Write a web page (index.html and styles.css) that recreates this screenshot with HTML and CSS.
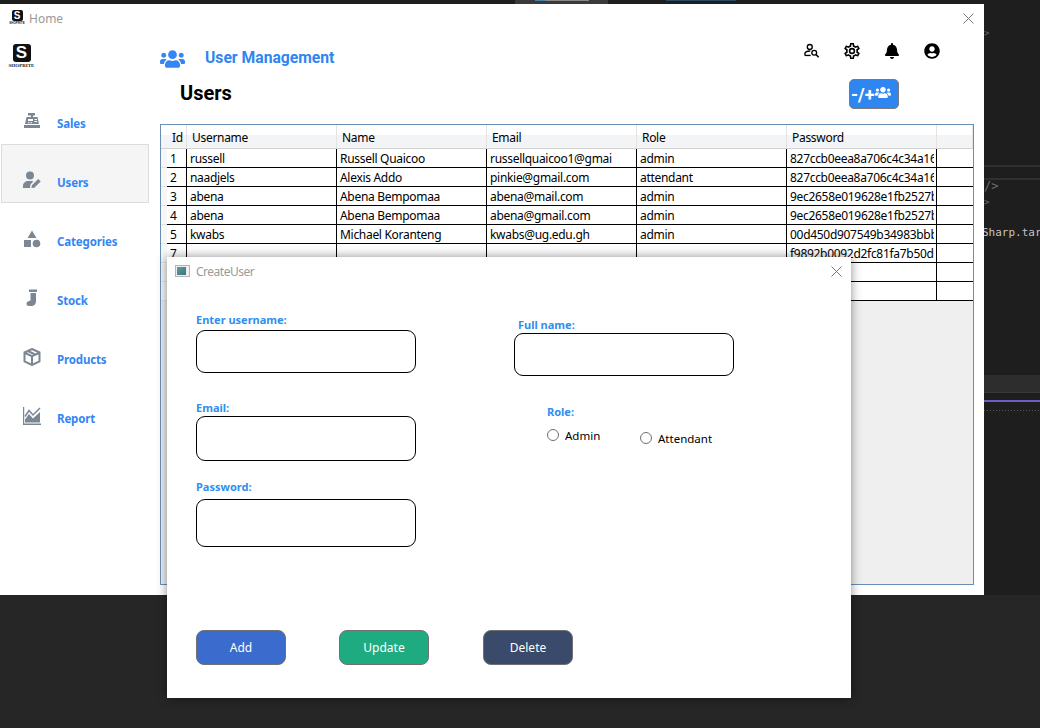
FILE: index.html
```html
<!DOCTYPE html>
<html>
<head>
  <title>Home</title>
  <link rel="stylesheet" href="styles.css">
</head>
<body>

  <!-- DESKTOP BEHIND THE WINDOWS -->
  <div class="editor">
    <div class="tabstrip">
      <div class="tab"><span class="tab-blue"></span><span class="tab-grey"></span></div>
      <span class="tab-frag"></span>
    </div>
    <div class="code">
      <div class="code-mark">&gt;</div>
      <div class="code-rule"></div>
      <div class="code-rule code-rule-2"></div>
      <div class="code-line code-dim code-first">/&gt;</div>
      <div class="code-line code-dim code-small">&gt;</div>
      <div class="code-line code-text">Sharp.tar</div>
      <div class="code-band"></div>
      <div class="code-purple"></div>
      <div class="code-dots"></div>
    </div>
  </div>

  <!-- HOME WINDOW -->
  <div class="window home">
    <div class="titlebar">
      <div class="logo logo-small"><span class="logo-box">S</span><span class="logo-name">SHOPRITE</span></div>
      <span class="titlebar-text">Home</span>
      <svg class="close" viewBox="0 0 11 11"><path d="M.5.5l10 10M10.500.5l-10 10"/></svg>
    </div>

    <div class="home-body">
      <div class="sidebar">
        <div class="logo logo-big"><span class="logo-box">S</span><span class="logo-name">SHOPRITE</span></div>
        <div class="nav">
          <div class="nav-item">
            <svg class="nav-icon" viewBox="0 0 18 18"><path d="M5 1h7v2.500h-2V5h4.500L16 12H2L3.500 5H8V3.500H5zM1 13h16v3H1z"/><path fill="#fff" d="M5 7h5v2H5zM11.500 7H14v1h-2.500zM11.500 9H14v1h-2.500zM5 10.200h1.500v1H5zM7.500 10.200H9v1H7.500z"/></svg>
            <span>Sales</span>
          </div>
          <div class="nav-item nav-active">
            <svg class="nav-icon" viewBox="0 0 18 18"><circle cx="7" cy="4.500" r="4"/><path d="M5 10h3.500c.7 0 1.300.1 1.900.3L7.500 13.500 7 17H0v-2c0-2.800 2.200-5 5-5zM8.500 17l.4-2.800L15.200 8l2.500 2.500-6.300 6.200z"/></svg>
            <span>Users</span>
          </div>
          <div class="nav-item">
            <svg class="nav-icon" viewBox="0 0 18 18"><path d="M9 .5l4.500 7.500h-9zM1 10h7v7H1z"/><circle cx="13.500" cy="13.500" r="3.800"/></svg>
            <span>Categories</span>
          </div>
          <div class="nav-item">
            <svg class="nav-icon" viewBox="0 0 18 18"><path d="M6 .5h8v2.500H6zM7.500 4H13v8.500c0 2.500-2 4.500-4.500 4.500H6c-1.500 0-2.500-1-2.500-2.300 0-1.200.8-2 1.800-2.400L7.500 11.500z"/></svg>
            <span>Stock</span>
          </div>
          <div class="nav-item">
            <svg class="nav-icon nav-box" viewBox="0 0 18 18"><path d="M9 1l7.500 3.500v8.800L9 17l-7.500-3.700V4.500zM2 5l7 3.200L16 5M9 8.200V17M5 3l7 3.500"/></svg>
            <span>Products</span>
          </div>
          <div class="nav-item">
            <svg class="nav-icon" viewBox="0 0 18 18"><path d="M0 0h1.200v16.500H18V18H0z"/><path d="M2 15.500v-3L6 7l4 4.500L17 5v10.500z"/><path fill="none" stroke="#7b8794" stroke-width="1.500" d="M2 9.500L6 3.500l4 4.500 7-7"/></svg>
            <span>Report</span>
          </div>
        </div>
      </div>

      <div class="main">
        <div class="header">
          <svg class="header-icon" viewBox="0 0 640 512"><path d="M96 224c35.300 0 64-28.700 64-64s-28.700-64-64-64-64 28.700-64 64 28.700 64 64 64zm448 0c35.300 0 64-28.700 64-64s-28.700-64-64-64-64 28.700-64 64 28.700 64 64 64zm32 32h-64c-17.600 0-33.500 7.100-45.100 18.600 40.300 22.100 68.900 62 75.100 109.400h66c17.700 0 32-14.300 32-32v-32c0-35.300-28.700-64-64-64zm-256 0c61.900 0 112-50.100 112-112S381.900 32 320 32 208 82.100 208 144s50.100 112 112 112zm76.800 32h-8.300c-20.800 10-43.900 16-68.500 16s-47.600-6-68.500-16h-8.300C179.600 288 128 339.600 128 403.200V432c0 26.500 21.500 48 48 48h288c26.500 0 48-21.500 48-48v-28.800c0-63.600-51.600-115.200-115.200-115.200zm-223.700-13.400C161.500 263.100 145.600 256 128 256H64c-35.300 0-64 28.700-64 64v32c0 17.700 14.300 32 32 32h65.900c6.300-47.400 34.900-87.300 75.200-109.400z"/></svg>
          <span class="header-title">User Management</span>
          <div class="toolbar">
            <svg class="tool-icon" viewBox="0 0 18 18"><circle cx="6.500" cy="4.500" r="2.800" fill="none" stroke="#000" stroke-width="1.500"/><path d="M1 14v-1.500c0-2 2.500-3.500 6-3.500" fill="none" stroke="#000" stroke-width="1.500"/><path d="M1 14h6.500" fill="none" stroke="#000" stroke-width="1.500"/><circle cx="11.500" cy="11" r="2.700" fill="none" stroke="#000" stroke-width="1.500"/><path d="M13.500 13l3 3" fill="none" stroke="#000" stroke-width="1.800"/></svg>
            <svg class="tool-icon" viewBox="2 2 20 20"><path d="M12,8A4,4 0 0,1 16,12A4,4 0 0,1 12,16A4,4 0 0,1 8,12A4,4 0 0,1 12,8M12,10A2,2 0 0,0 10,12A2,2 0 0,0 12,14A2,2 0 0,0 14,12A2,2 0 0,0 12,10M10,22C9.750,22 9.540,21.820 9.500,21.580L9.130,18.930C8.500,18.680 7.960,18.340 7.440,17.940L4.950,18.950C4.730,19.030 4.460,18.950 4.340,18.730L2.340,15.270C2.210,15.050 2.270,14.780 2.460,14.630L4.570,12.970L4.500,12L4.570,11L2.460,9.370C2.270,9.220 2.210,8.950 2.340,8.730L4.340,5.270C4.460,5.050 4.730,4.960 4.950,5.050L7.440,6.050C7.960,5.660 8.500,5.320 9.130,5.070L9.500,2.420C9.540,2.180 9.750,2 10,2H14C14.250,2 14.460,2.180 14.500,2.420L14.870,5.070C15.500,5.320 16.040,5.660 16.560,6.050L19.050,5.050C19.270,4.960 19.540,5.050 19.660,5.270L21.660,8.730C21.790,8.950 21.730,9.220 21.540,9.370L19.430,11L19.500,12L19.430,13L21.540,14.630C21.730,14.780 21.790,15.050 21.660,15.270L19.660,18.730C19.540,18.950 19.270,19.040 19.050,18.950L16.560,17.950C16.040,18.340 15.500,18.680 14.870,18.930L14.500,21.580C14.460,21.820 14.250,22 14,22H10M11.250,4L10.880,6.610C9.680,6.860 8.620,7.500 7.850,8.390L5.440,7.350L4.690,8.650L6.800,10.200C6.400,11.370 6.400,12.640 6.800,13.800L4.680,15.360L5.430,16.660L7.860,15.620C8.630,16.500 9.680,17.140 10.870,17.380L11.240,20H12.760L13.130,17.390C14.320,17.140 15.370,16.500 16.140,15.620L18.570,16.660L19.320,15.360L17.200,13.810C17.600,12.640 17.600,11.370 17.200,10.200L19.310,8.650L18.560,7.350L16.150,8.390C15.380,7.500 14.320,6.860 13.120,6.620L12.750,4H11.250Z"/></svg>
            <svg class="tool-icon" viewBox="0 0 448 512"><path d="M224 512c35.320 0 63.970-28.650 63.970-64H160.030c0 35.350 28.650 64 63.970 64zm215.390-149.710c-19.320-20.760-55.470-51.990-55.470-154.290 0-77.700-54.480-139.900-127.940-155.160V32c0-17.670-14.320-32-31.980-32s-31.980 14.330-31.980 32v20.840C118.560 68.100 64.080 130.300 64.080 208c0 102.300-36.150 133.530-55.470 154.290-6 6.450-8.660 14.160-8.610 21.710.11 16.400 12.980 32 32.100 32h383.800c19.120 0 32-15.600 32.100-32 .05-7.550-2.610-15.270-8.610-21.710z"/></svg>
            <svg class="tool-icon" viewBox="0 0 496 512"><path d="M248 8C111 8 0 119 0 256s111 248 248 248 248-111 248-248S385 8 248 8zm0 96c48.600 0 88 39.400 88 88s-39.400 88-88 88-88-39.400-88-88 39.400-88 88-88zm0 344c-58.700 0-111.300-26.600-146.500-68.200 18.800-35.400 55.600-59.800 98.500-59.800 2.400 0 4.800.4 7.100 1.100 13 4.200 26.600 6.900 40.900 6.900 14.300 0 28-2.700 40.900-6.900 2.300-.7 4.700-1.100 7.100-1.100 42.900 0 79.700 24.400 98.500 59.800C359.300 421.400 306.700 448 248 448z"/></svg>
          </div>
        </div>

        <div class="subheader">
          <span class="page-title">Users</span>
          <button class="manage-btn">-/+<svg class="manage-icon" viewBox="0 0 640 512"><path d="M96 224c35.300 0 64-28.700 64-64s-28.700-64-64-64-64 28.700-64 64 28.700 64 64 64zm448 0c35.300 0 64-28.700 64-64s-28.700-64-64-64-64 28.700-64 64 28.700 64 64 64zm32 32h-64c-17.600 0-33.500 7.100-45.100 18.600 40.300 22.100 68.900 62 75.100 109.400h66c17.700 0 32-14.300 32-32v-32c0-35.300-28.700-64-64-64zm-256 0c61.900 0 112-50.100 112-112S381.900 32 320 32 208 82.100 208 144s50.100 112 112 112zm76.800 32h-8.300c-20.800 10-43.900 16-68.500 16s-47.600-6-68.500-16h-8.300C179.600 288 128 339.600 128 403.200V432c0 26.500 21.500 48 48 48h288c26.500 0 48-21.500 48-48v-28.800c0-63.600-51.600-115.200-115.200-115.200zm-223.700-13.400C161.500 263.100 145.600 256 128 256H64c-35.300 0-64 28.700-64 64v32c0 17.700 14.300 32 32 32h65.900c6.300-47.400 34.900-87.300 75.200-109.400z"/></svg></button>
        </div>

        <div class="grid">
          <table class="users">
            <colgroup>
              <col class="col-head"><col class="col-id"><col class="col-wide"><col class="col-wide"><col class="col-wide"><col class="col-wide"><col class="col-wide"><col class="col-rest">
            </colgroup>
            <thead>
              <tr><th class="head-left"></th><th>Id</th><th>Username</th><th>Name</th><th>Email</th><th>Role</th><th>Password</th><th></th></tr>
            </thead>
            <tbody>
              <tr><th></th><td>1</td><td>russell</td><td>Russell Quaicoo</td><td>russellquaicoo1@gmai</td><td>admin</td><td><span class="pw">827ccb0eea8a706c4c34a16</span></td><td></td></tr>
              <tr><th></th><td>2</td><td>naadjels</td><td>Alexis Addo</td><td>pinkie@gmail.com</td><td>attendant</td><td><span class="pw">827ccb0eea8a706c4c34a16</span></td><td></td></tr>
              <tr><th></th><td>3</td><td>abena</td><td>Abena Bempomaa</td><td>abena@mail.com</td><td>admin</td><td><span class="pw">9ec2658e019628e1fb2527b</span></td><td></td></tr>
              <tr><th></th><td>4</td><td>abena</td><td>Abena Bempomaa</td><td>abena@gmail.com</td><td>admin</td><td><span class="pw">9ec2658e019628e1fb2527b</span></td><td></td></tr>
              <tr><th></th><td>5</td><td>kwabs</td><td>Michael Koranteng</td><td>kwabs@ug.edu.gh</td><td>admin</td><td><span class="pw">00d450d907549b34983bbb</span></td><td></td></tr>
              <tr><th></th><td>7</td><td></td><td></td><td></td><td></td><td><span class="pw">f9892b0092d2fc81fa7b50d0</span></td><td></td></tr>
              <tr><th></th><td></td><td></td><td></td><td></td><td></td><td></td><td></td></tr>
              <tr><th></th><td></td><td></td><td></td><td></td><td></td><td></td><td></td></tr>
            </tbody>
          </table>
        </div>
      </div>
    </div>
  </div>

  <!-- CREATE USER DIALOG -->
  <div class="window dialog">
    <div class="titlebar dialog-bar">
      <span class="app-icon"><span class="app-icon-fill"></span></span>
      <span class="titlebar-text dialog-title">CreateUser</span>
      <svg class="close" viewBox="0 0 11 11"><path d="M.5.5l10 10M10.500.5l-10 10"/></svg>
    </div>

    <div class="form">
      <div class="form-col">
        <label class="field-label lbl-username">Enter username:</label>
        <input class="field field-username" type="text">
        <label class="field-label lbl-email">Email:</label>
        <input class="field field-email" type="text">
        <label class="field-label lbl-password">Password:</label>
        <input class="field field-password" type="text">
      </div>
      <div class="form-col">
        <label class="field-label lbl-fullname">Full name:</label>
        <input class="field field-username" type="text">
        <div class="role">
          <label class="field-label">Role:</label>
          <div class="role-options">
            <label class="radio"><input type="radio" name="role"> Admin</label>
            <label class="radio radio-low"><input type="radio" name="role"> Attendant</label>
          </div>
        </div>
      </div>
    </div>

    <div class="actions">
      <button class="action action-add">Add</button>
      <button class="action action-update">Update</button>
      <button class="action action-delete">Delete</button>
    </div>
  </div>

</body>
</html>
```
FILE: styles.css
```css
html, body {
  margin: 0;
  height: 100%;
}
body {
  width: 1040px;
  height: 728px;
  overflow: hidden;
  position: relative;
  background: #262626;
  font-family: "Noto Sans", "Open Sans", sans-serif;
  font-size: 12px;
  color: #000;
}

/* desktop behind */
.editor {
  position: absolute;
  left: 0;
  top: 0;
  width: 1040px;
  height: 595px;
  background: #1e1e1e;
}
.tabstrip {
  height: 4px;
  display: flex;
  overflow: hidden;
}
.tab {
  width: 93px;
  margin-left: 515px;
  background: #3a3a3a;
  display: flex;
  padding-left: 20px;
  box-sizing: border-box;
}
.tab-blue {
  width: 10px;
  height: 1px;
  background: #4a7fa8;
}
.tab-grey {
  width: 44px;
  height: 1px;
  background: #888;
}
.tab-frag {
  width: 70px;
  height: 1px;
  margin-left: 58px;
  background: #2b4a66;
}
.code {
  margin-left: 984px;
  height: 591px;
  font-family: "DejaVu Sans Mono", monospace;
  color: #9a9a9a;
  overflow: hidden;
  white-space: nowrap;
}
.code-mark {
  height: 14px;
  margin-top: 24px;
  font-size: 9px;
  color: #6a6a6a;
}
.code-rule {
  height: 2px;
  margin-top: 123px;
  background: #303030;
}
.code-rule-2 {
  margin-top: 11px;
}
.code-line {
  height: 16px;
  line-height: 16px;
}
.code-first {
  margin-top: -2px;
}
.code-dim {
  color: #6a6a6a;
}
.code-small {
  font-size: 9px;
}
.code-text {
  margin-top: 15px;
  margin-left: -2px;
  font-size: 11px;
  color: #c4c4c4;
}
.code-band {
  height: 17px;
  margin-top: 134px;
  background: #2d2d2d;
  border-bottom: 1px solid #3a3a3a;
}
.code-purple {
  height: 2px;
  margin-top: 7px;
  background: #6a5fc4;
}
.code-dots {
  height: 1px;
  margin-top: 8px;
  background: repeating-linear-gradient(90deg, #555 0 1px, transparent 1px 3px);
}

/* windows */
.window {
  position: absolute;
  background: #fff;
  display: flex;
  flex-direction: column;
}
.home {
  left: 0;
  top: 4px;
  width: 984px;
  height: 591px;
}
.dialog {
  left: 167px;
  top: 257px;
  width: 684px;
  height: 441px;
  box-shadow: 0 0 10px rgba(0, 0, 0, 0.45);
}
.titlebar {
  height: 30px;
  flex: none;
  box-sizing: border-box;
  display: flex;
  align-items: center;
  padding-left: 9px;
  padding-right: 10px;
  padding-bottom: 2px;
}
.titlebar-text {
  color: #9a9a9a;
  font-size: 12px;
}
.dialog-title {
  letter-spacing: -0.5px;
}
.close {
  width: 11px;
  height: 11px;
  margin-left: auto;
  fill: none;
  stroke: #777;
  stroke-width: 1;
}

/* logo */
.logo {
  display: flex;
  flex-direction: column;
  align-items: center;
  font-family: "Liberation Sans", sans-serif;
  font-weight: bold;
}
.logo-box {
  background: #111;
  color: #fff;
  text-align: center;
}
.logo-small {
  width: 16px;
  margin-right: 4px;
}
.logo-small .logo-box {
  width: 11px;
  height: 11px;
  line-height: 11px;
  font-size: 10px;
  border-radius: 2px;
}
.logo-small .logo-name {
  font-size: 3px;
  line-height: 5px;
  color: #222;
}
.logo-big {
  width: 25px;
  height: 41px;
  margin-left: 9px;
  margin-top: 10px;
}
.logo-big .logo-box {
  width: 18px;
  height: 18px;
  line-height: 18px;
  font-size: 17px;
  border-radius: 3px;
}
.logo-big .logo-name {
  font-family: "Liberation Serif", serif;
  font-size: 5px;
  line-height: 8px;
  color: #222;
}

.home-body {
  flex: 1;
  display: flex;
  min-height: 0;
}

/* sidebar */
.sidebar {
  width: 149px;
  flex: none;
}
.nav-item {
  height: 59px;
  box-sizing: border-box;
  margin-left: 1px;
  padding-left: 21px;
  padding-top: 17px;
  display: flex;
  align-items: center;
  border: 1px solid transparent;
  color: #3486f5;
  font-weight: bold;
  font-size: 11.500px;
  letter-spacing: -0.15px;
}
.nav-active {
  background: #f5f5f5;
  border-color: #dcdcdc;
}
.nav-icon {
  width: 18px;
  height: 18px;
  fill: #7b8794;
  margin-right: 16px;
  margin-top: -4px;
}
.nav-box {
  fill: none;
  stroke: #7b8794;
  stroke-width: 2;
}

/* main */
.main {
  flex: 1;
  min-width: 0;
  padding-left: 11px;
  padding-right: 10px;
}
.header {
  height: 45px;
  display: flex;
}
.header-icon {
  width: 25px;
  height: 20px;
  fill: #3486f5;
  margin-top: 15px;
}
.header-title {
  margin-left: 20px;
  margin-top: 14px;
  color: #2f86f0;
  font-family: Roboto, sans-serif;
  font-weight: bold;
  font-size: 15.700px;
  line-height: 20px;
}
.toolbar {
  margin-left: auto;
  margin-right: 34px;
  margin-top: 9px;
  height: 16px;
  display: flex;
  gap: 24px;
}
.tool-icon {
  width: 16px;
  height: 16px;
  fill: #000;
}
.subheader {
  height: 45px;
  display: flex;
  padding-left: 20px;
}
.page-title {
  font-family: Roboto, sans-serif;
  font-weight: bold;
  font-size: 20px;
  line-height: 28px;
}
.manage-btn {
  margin-left: auto;
  margin-right: 75px;
  width: 50px;
  height: 30px;
  padding: 0 0 0 1px;
  box-sizing: border-box;
  border: 1px solid #7a7a7a;
  border-radius: 5px;
  background: #2f86f0;
  color: #fff;
  font-family: Roboto, sans-serif;
  font-weight: bold;
  font-size: 18px;
  display: flex;
  align-items: center;
  justify-content: flex-start;
}
.manage-icon {
  width: 16px;
  height: 13px;
  margin-top: -3px;
  fill: #fff;
}

/* data grid */
.grid {
  height: 461px;
  box-sizing: border-box;
  border: 1px solid #6a8fb5;
  background: #efefef;
  overflow: hidden;
}
.users {
  table-layout: fixed;
  border-collapse: separate;
  border-spacing: 0;
  width: 812px;
  background: #fff;
  letter-spacing: -0.3px;
}
.col-head { width: 6px; }
.col-id { width: 20px; }
.col-wide { width: 150px; }
.col-rest { width: 36px; }
.users thead th {
  height: 24px;
  box-sizing: border-box;
  padding: 3px 0 0 5px;
  text-align: left;
  font-weight: normal;
  line-height: 16px;
  background: linear-gradient(#fff 0 45%, #f3f4f6 45% 100%);
  border-right: 1px solid #e3e3e3;
  border-bottom: 1px solid #d2d2d2;
}
.users thead .head-left {
  padding: 0;
  border-right: 0;
}
.users tbody th {
  padding: 0;
  background: #f7f7f7;
  border-bottom: 1px solid #e4e4e4;
}
.users td {
  height: 19px;
  box-sizing: border-box;
  padding: 1px 2px 0 3px;
  line-height: 16px;
  white-space: nowrap;
  overflow: hidden;
  border-right: 1px solid #000;
  border-bottom: 1px solid #000;
}
.users td:last-child {
  border-right: 0;
}
.pw {
  display: block;
  width: 144px;
  overflow: hidden;
}

/* dialog */
.dialog-bar {
  padding-left: 8px;
  padding-right: 9px;
}
.app-icon {
  width: 15px;
  height: 12px;
  box-sizing: border-box;
  border: 1px solid #b5b5b5;
  margin-right: 6px;
  display: block;
  background: #eee;
}
.app-icon-fill {
  display: block;
  width: 9px;
  height: 8px;
  margin: 1px;
  background: linear-gradient(135deg, #5fa08f, #3f6f8f);
}
.form {
  height: 343px;
  flex: none;
  display: flex;
  gap: 98px;
  padding-left: 29px;
}
.form-col {
  width: 220px;
}
.field-label {
  display: block;
  height: 14px;
  line-height: 14px;
  font-size: 11px;
  font-weight: bold;
  color: #2f8ef0;
}
.field {
  display: block;
  width: 220px;
  box-sizing: border-box;
  border: 1px solid #000;
  border-radius: 9px;
  background: #fff;
  padding: 0 6px;
  margin: 0;
}
.lbl-username { margin-top: 26px; margin-bottom: 3px; }
.lbl-email { margin-top: 28px; margin-bottom: 1px; }
.lbl-password { margin-top: 19px; margin-bottom: 5px; }
.lbl-fullname { margin-top: 31px; margin-bottom: 1px; margin-left: 4px; }
.field-username { height: 43px; }
.field-email { height: 45px; }
.field-password { height: 48px; }
.role {
  margin-top: 29px;
  padding-left: 33px;
}
.role-options {
  display: flex;
  align-items: flex-start;
  margin-top: 9px;
}
.radio {
  width: 93px;
  flex: none;
  height: 14px;
  display: flex;
  align-items: center;
  gap: 6px;
  font-size: 11.500px;
}
.radio-low {
  margin-top: 3px;
}
.radio input {
  appearance: none;
  width: 12px;
  height: 12px;
  margin: 0;
  border: 1px solid #707070;
  border-radius: 50%;
  background: #fff;
}
.actions {
  display: flex;
  padding-left: 29px;
}
.action {
  width: 90px;
  height: 35px;
  padding: 0;
  margin-right: 53px;
  box-sizing: border-box;
  border: 1px solid #707070;
  border-radius: 8px;
  color: #fff;
  font-family: inherit;
  font-size: 12px;
}
.action-add { background: #3a6bcd; }
.action-update { background: #1fab80; margin-right: 54px; }
.action-delete { background: #3a4a6b; }
```
